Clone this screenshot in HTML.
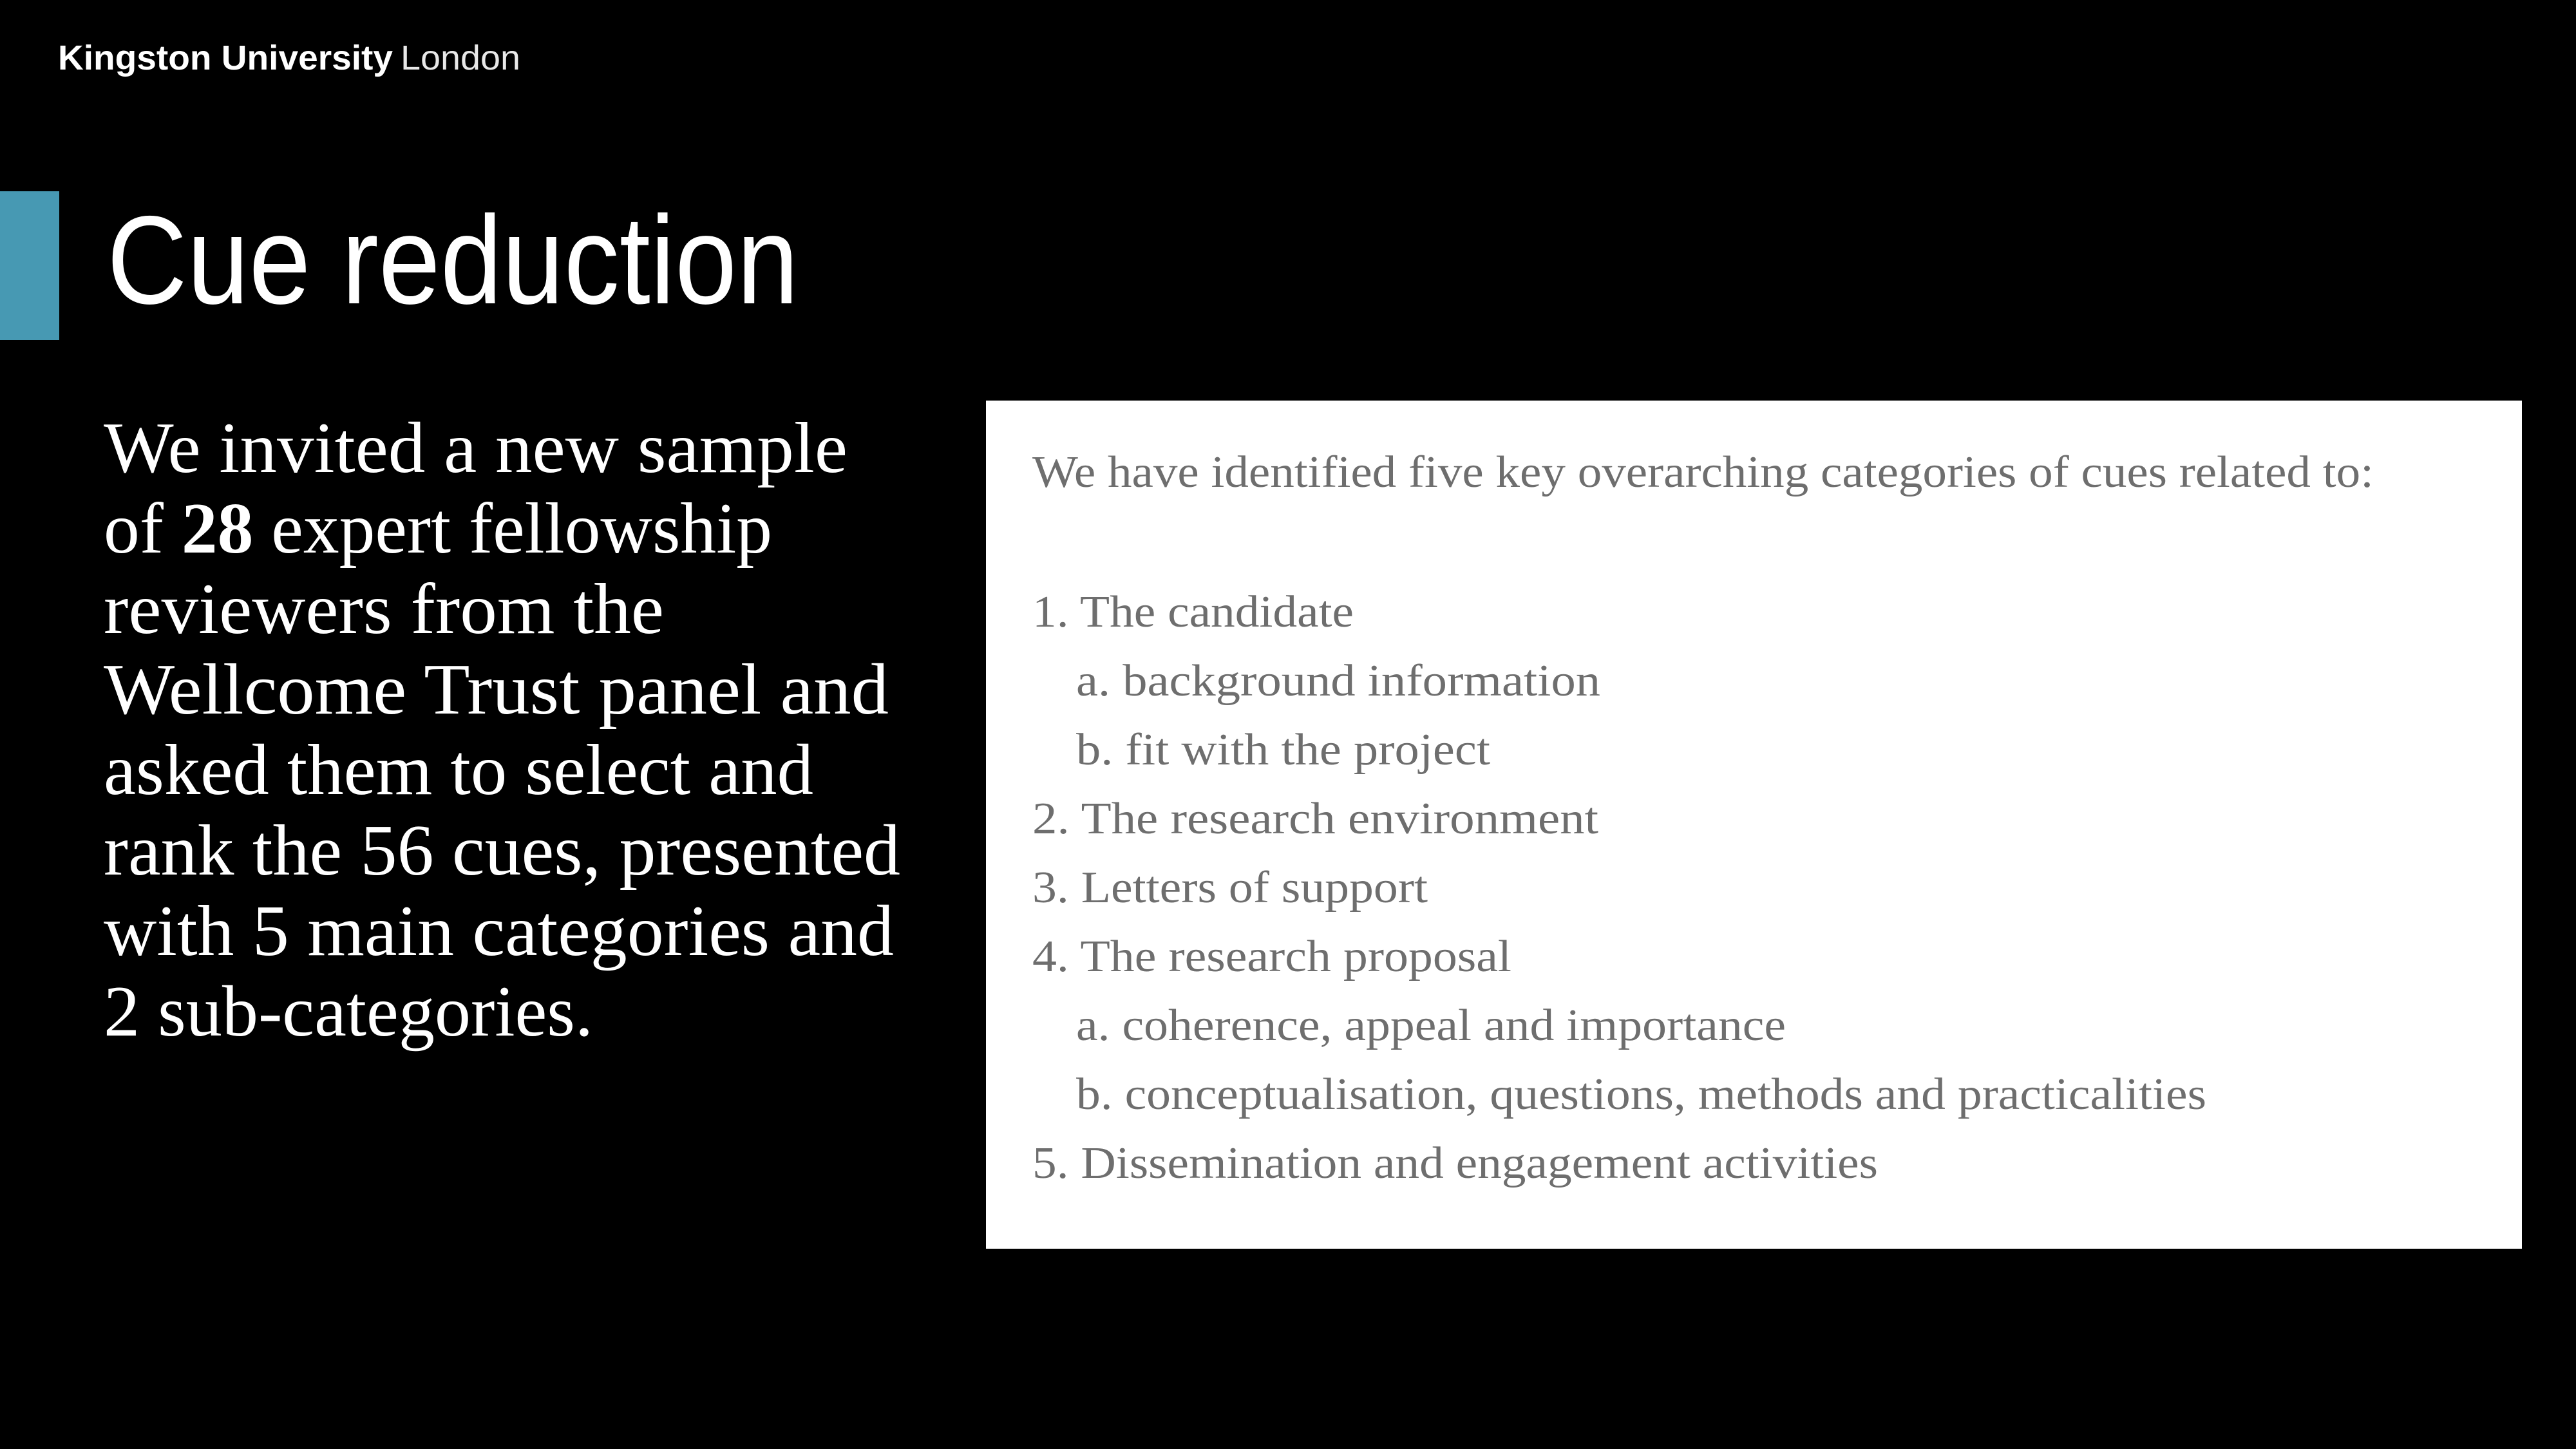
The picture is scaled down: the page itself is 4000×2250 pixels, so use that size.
<!DOCTYPE html>
<html><head><meta charset="utf-8"><style>
html,body{margin:0;padding:0;background:#000;}
svg{display:block}
</style></head><body>
<svg width="4000" height="2250" viewBox="0 0 4000 2250" xmlns="http://www.w3.org/2000/svg">
<rect width="4000" height="2250" fill="#000"/>
<g font-family="Liberation Sans, sans-serif" fill="#fff" font-size="54">
<text x="90" y="108" font-weight="bold" textLength="520" lengthAdjust="spacingAndGlyphs">Kingston University</text>
<text x="622" y="108" font-weight="300" fill="#e8e8e8" textLength="186" lengthAdjust="spacingAndGlyphs">London</text>
</g>
<rect x="0" y="297" width="92" height="231" fill="#4799b3"/>
<text x="166" y="471" font-family="Liberation Sans, sans-serif" font-size="195" fill="#fff" textLength="1074" lengthAdjust="spacingAndGlyphs">Cue reduction</text>
<g font-family="Liberation Serif, serif" font-size="112" fill="#fff">
<text x="161" y="733" textLength="1155" lengthAdjust="spacingAndGlyphs">We invited a new sample</text>
<text x="161" y="858" textLength="1038" lengthAdjust="spacingAndGlyphs">of <tspan font-weight="bold">28</tspan> expert fellowship</text>
<text x="161" y="983" textLength="870" lengthAdjust="spacingAndGlyphs">reviewers from the</text>
<text x="161" y="1108" textLength="1219" lengthAdjust="spacingAndGlyphs">Wellcome Trust panel and</text>
<text x="161" y="1233" textLength="1102" lengthAdjust="spacingAndGlyphs">asked them to select and</text>
<text x="161" y="1358" textLength="1237" lengthAdjust="spacingAndGlyphs">rank the 56 cues, presented</text>
<text x="161" y="1483" textLength="1227" lengthAdjust="spacingAndGlyphs">with 5 main categories and</text>
<text x="161" y="1608" textLength="760" lengthAdjust="spacingAndGlyphs">2 sub-categories.</text>
</g>
<rect x="1531" y="622" width="2385" height="1317" fill="#fff"/>
<g font-family="Liberation Serif, serif" font-size="70" fill="#6e6e6e">
<text x="1603" y="756" textLength="2083" lengthAdjust="spacingAndGlyphs">We have identified five key overarching categories of cues related to:</text>
<text x="1603" y="973" textLength="499" lengthAdjust="spacingAndGlyphs">1. The candidate</text>
<text x="1671" y="1080" textLength="814" lengthAdjust="spacingAndGlyphs">a. background information</text>
<text x="1671" y="1187" textLength="643" lengthAdjust="spacingAndGlyphs">b. fit with the project</text>
<text x="1603" y="1294" textLength="879" lengthAdjust="spacingAndGlyphs">2. The research environment</text>
<text x="1603" y="1401" textLength="614" lengthAdjust="spacingAndGlyphs">3. Letters of support</text>
<text x="1603" y="1508" textLength="744" lengthAdjust="spacingAndGlyphs">4. The research proposal</text>
<text x="1671" y="1615" textLength="1102" lengthAdjust="spacingAndGlyphs">a. coherence, appeal and importance</text>
<text x="1671" y="1722" textLength="1755" lengthAdjust="spacingAndGlyphs">b. conceptualisation, questions, methods and practicalities</text>
<text x="1603" y="1829" textLength="1313" lengthAdjust="spacingAndGlyphs">5. Dissemination and engagement activities</text>
</g>
</svg>
</body></html>
